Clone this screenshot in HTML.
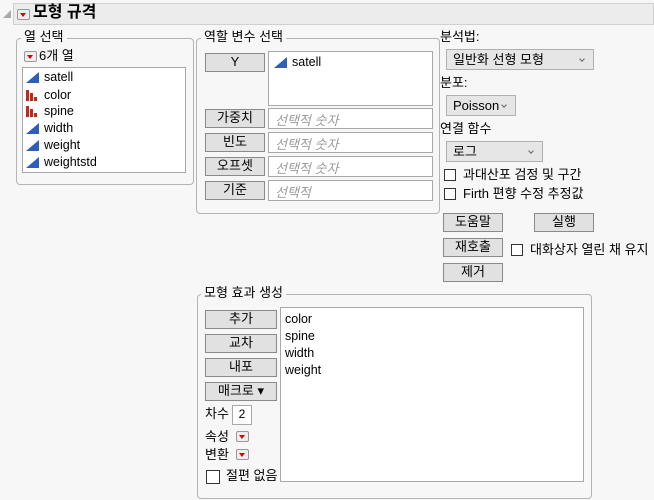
<!DOCTYPE html>
<html><head><meta charset="utf-8"><style>
body{margin:0;width:654px;height:500px;background:#f7f7f7;font-family:"Liberation Sans","Noto Sans CJK KR",sans-serif;font-size:12px;color:#000;position:relative;overflow:hidden}
.a{position:absolute;font-size:13px}
.panel{position:absolute;border:1px solid #b4b4b4;border-radius:4px}
.lg{position:absolute;background:#f7f7f7;padding:0 3px;font-size:13px;line-height:14px}
.box{position:absolute;background:#fff;border:1px solid #a8a8a8;box-sizing:border-box}
.btn{position:absolute;background:#e1e1e1;border:1px solid #8a8a8a;box-sizing:border-box;text-align:center;font-size:13px;line-height:16px}
.ph{position:absolute;color:#999;font-style:italic;left:6px;top:1px;font-size:13px}
.dd{position:absolute;background:#e6e6e6;border:1px solid #b0b0b0;box-sizing:border-box;line-height:19px;padding-left:6px;font-size:13px}
.dd::after{content:"";position:absolute;right:9px;top:7px;width:3px;height:3px;border-right:1px solid #666;border-bottom:1px solid #666;transform:rotate(45deg)}
.cb{position:absolute;width:12px;height:12px;background:#fff;border:1px solid #333;box-sizing:border-box}
.rb{position:absolute;width:13px;height:11px;background:#eee;border:1px solid #999;box-sizing:border-box;border-radius:2px}
.rb::after{content:"";position:absolute;left:2px;top:3px;border-left:3.5px solid transparent;border-right:3.5px solid transparent;border-top:4px solid #d00}
.it{position:absolute;left:3px;height:17px;line-height:17px;font-size:12.5px}
.it span{margin-left:18px}
.tri{position:absolute;left:0;top:3px;width:0;height:0;border-left:13px solid transparent;border-bottom:11px solid #2d5fb8}
.bar{position:absolute;left:0;bottom:3px;width:3px;background:#c0281c}
</style></head><body>
<div class="a" style="left:3px;top:10px;width:0;height:0;border-left:8px solid transparent;border-bottom:8px solid #aaa"></div>
<div class="a" style="left:13px;top:3px;width:641px;height:22px;background:#ececec;border:1px solid #cfcfcf;box-sizing:border-box"></div>
<div class="rb" style="left:17px;top:9px"></div>
<div class="a" style="left:33px;top:3px;font-size:16px;font-weight:bold;line-height:20px">모형 규격</div>

<div class="panel" style="left:16px;top:38px;width:176px;height:145px"></div>
<div class="lg" style="left:21px;top:30px">열 선택</div>
<div class="rb" style="left:24px;top:51px"></div>
<div class="a" style="left:39px;top:49px;line-height:14px">6개 열</div>
<div class="box" style="left:22px;top:67px;width:164px;height:106px">
<div class="it" style="top:1px"><div class="tri"></div><span>satell</span></div>
<div class="it" style="top:19px"><div class="bar" style="height:11px"></div><div class="bar" style="left:4px;height:8px"></div><div class="bar" style="left:8px;height:4px"></div><span>color</span></div>
<div class="it" style="top:35px"><div class="bar" style="height:11px"></div><div class="bar" style="left:4px;height:8px"></div><div class="bar" style="left:8px;height:4px"></div><span>spine</span></div>
<div class="it" style="top:52px"><div class="tri"></div><span>width</span></div>
<div class="it" style="top:69px"><div class="tri"></div><span>weight</span></div>
<div class="it" style="top:86px"><div class="tri"></div><span>weightstd</span></div>
</div>

<div class="panel" style="left:196px;top:38px;width:242px;height:174px"></div>
<div class="lg" style="left:201px;top:30px">역할 변수 선택</div>
<div class="btn" style="left:205px;top:53px;width:60px;height:19px">Y</div>
<div class="box" style="left:268px;top:51px;width:165px;height:55px"><div class="it" style="top:2px;left:5px"><div class="tri"></div><span>satell</span></div></div>
<div class="btn" style="left:205px;top:109px;width:60px;height:19px">가중치</div>
<div class="box" style="left:268px;top:108px;width:165px;height:21px"><span class="ph">선택적 숫자</span></div>
<div class="btn" style="left:205px;top:133px;width:60px;height:19px">빈도</div>
<div class="box" style="left:268px;top:132px;width:165px;height:21px"><span class="ph">선택적 숫자</span></div>
<div class="btn" style="left:205px;top:157px;width:60px;height:19px">오프셋</div>
<div class="box" style="left:268px;top:156px;width:165px;height:21px"><span class="ph">선택적 숫자</span></div>
<div class="btn" style="left:205px;top:181px;width:60px;height:19px">기준</div>
<div class="box" style="left:268px;top:180px;width:165px;height:21px"><span class="ph">선택적</span></div>

<div class="a" style="left:440px;top:29px;line-height:16px">분석법:</div>
<div class="dd" style="left:446px;top:49px;width:148px;height:21px">일반화 선형 모형</div>
<div class="a" style="left:440px;top:75px;line-height:16px">분포:</div>
<div class="dd" style="left:446px;top:95px;width:70px;height:21px">Poisson</div>
<div class="a" style="left:440px;top:121px;line-height:16px">연결 함수</div>
<div class="dd" style="left:446px;top:141px;width:97px;height:21px">로그</div>
<div class="cb" style="left:444px;top:169px"></div>
<div class="a" style="left:463px;top:167px;line-height:16px">과대산포 검정 및 구간</div>
<div class="cb" style="left:444px;top:188px"></div>
<div class="a" style="left:463px;top:186px;line-height:16px">Firth 편향 수정 추정값</div>
<div class="btn" style="left:443px;top:213px;width:60px;height:19px">도움말</div>
<div class="btn" style="left:534px;top:213px;width:60px;height:19px">실행</div>
<div class="btn" style="left:443px;top:238px;width:60px;height:19px">재호출</div>
<div class="cb" style="left:511px;top:244px"></div>
<div class="a" style="left:530px;top:242px;line-height:16px">대화상자 열린 채 유지</div>
<div class="btn" style="left:443px;top:263px;width:60px;height:19px">제거</div>

<div class="panel" style="left:197px;top:294px;width:393px;height:203px"></div>
<div class="lg" style="left:201px;top:286px">모형 효과 생성</div>
<div class="btn" style="left:205px;top:310px;width:72px;height:19px">추가</div>
<div class="btn" style="left:205px;top:334px;width:72px;height:19px">교차</div>
<div class="btn" style="left:205px;top:358px;width:72px;height:19px">내포</div>
<div class="btn" style="left:205px;top:382px;width:72px;height:19px">매크로 ▾</div>
<div class="a" style="left:205px;top:406px;line-height:16px">차수</div>
<div class="box" style="left:232px;top:405px;width:20px;height:20px;text-align:center;line-height:16px">2</div>
<div class="a" style="left:205px;top:429px;line-height:16px">속성</div>
<div class="rb" style="left:236px;top:431px"></div>
<div class="a" style="left:205px;top:447px;line-height:16px">변환</div>
<div class="rb" style="left:236px;top:449px"></div>
<div class="cb" style="left:206px;top:470px;width:14px;height:14px"></div>
<div class="a" style="left:226px;top:468px;line-height:16px">절편 없음</div>
<div class="box" style="left:280px;top:307px;width:304px;height:175px">
<div class="a" style="left:4px;top:3px;line-height:17px;font-size:12.5px">color<br>spine<br>width<br>weight</div>
</div>
</body></html>
